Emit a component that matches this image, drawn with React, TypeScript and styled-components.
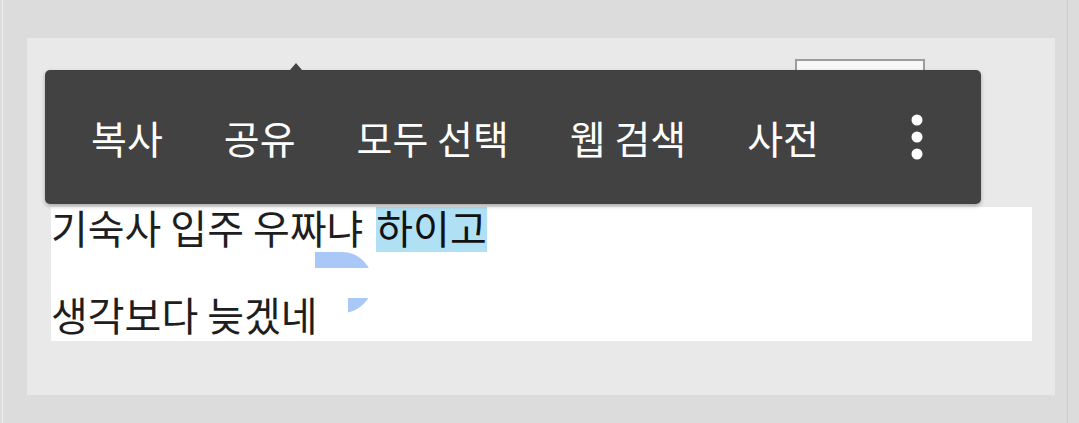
import React from "react";
import styled, { createGlobalStyle } from "styled-components";

const Global = createGlobalStyle`
  html, body { margin: 0; padding: 0; background: #dcdcdc; }
  body { font-family: "Noto Sans CJK KR", "Noto Sans", sans-serif; }
`;

const Screen = styled.div`
  width: 1079px;
  height: 423px;
  box-sizing: border-box;
  padding-left: 2px;
  background: #dcdcdc;
  overflow: hidden;
`;

const Frame = styled.div`
  width: 1066px;
  height: 423px;
  box-sizing: border-box;
  border-left: 1px solid #f0f0f0;
  border-right: 1px solid #cecece;
  padding: 38px 0 0 24px;
`;

const Panel = styled.div`
  position: relative;
  width: 1028px;
  height: 357px;
  box-sizing: border-box;
  background: #e9e9e9;
  padding: 21px 0 0 24px;
  display: flex;
  flex-direction: column;
`;

const HiddenRow = styled.div`
  display: flex;
  height: 40px;
  padding-left: 744px;
`;

const InputBox = styled.div`
  width: 130px;
  height: 40px;
  box-sizing: border-box;
  border: 2px solid #9c9c9c;
  background: #f8f8f8;
`;

const Content = styled.div`
  position: relative;
  margin-top: 108px;
  width: 981px;
  height: 134px;
  background: #ffffff;
  display: flex;
  flex-direction: column;
  color: #1e1e1e;
  font-size: 40px;
`;

const Line = styled.div<{ $gap?: number }>`
  height: 45px;
  line-height: 40px;
  white-space: pre;
  margin-top: ${(p) => p.$gap ?? 0}px;
`;

const Highlight = styled.span`
  display: inline-block;
  height: 45px;
  margin-left: 4px;
  background: #b0e0f4;
  color: #111;
`;

const Decoration = styled.svg`
  position: absolute;
  left: 264px;
  top: 45px;
`;

const Toolbar = styled.div`
  position: absolute;
  left: 18px;
  top: 32px;
  width: 936px;
  height: 134px;
  box-sizing: border-box;
  background: #424242;
  border-radius: 5px;
  box-shadow: 0 2px 4px rgba(0, 0, 0, 0.28);
  display: flex;
  align-items: center;
  padding-left: 46px;
  gap: 61px;

  &::before {
    content: "";
    position: absolute;
    left: 245px;
    top: -7px;
    border-left: 6px solid transparent;
    border-right: 6px solid transparent;
    border-bottom: 7px solid #444444;
  }
`;

const Action = styled.span`
  color: #ffffff;
  font-size: 39px;
  line-height: 1;
  white-space: pre;
`;

const More = styled.svg`
  margin-left: auto;
  margin-right: 58px;
`;

const actions = ["복사", "공유", "모두 선택", "웹 검색", "사전"];

export default function App() {
  return (
    <>
      <Global />
      <Screen>
        <Frame>
          <Panel>
            <HiddenRow>
              <InputBox />
            </HiddenRow>
            <Content>
              <Line>
                {"기숙사 입주 우짜냐 "}
                <Highlight>하이고</Highlight>
              </Line>
              <Line $gap={42}>생각보다 늦겠네</Line>
              <Decoration width="58" height="61" viewBox="0 0 58 61">
                <defs>
                  <clipPath id="dclip">
                    <rect x="0" y="0" width="58" height="16" />
                    <rect x="33" y="46" width="25" height="15" />
                  </clipPath>
                </defs>
                <path
                  d="M0 0 H27 A30.5 30.5 0 0 1 27 61 H0 Z"
                  fill="#a9c8f7"
                  clipPath="url(#dclip)"
                />
              </Decoration>
            </Content>
            <Toolbar>
              {actions.map((a) => (
                <Action key={a}>{a}</Action>
              ))}
              <More width="12" height="46" viewBox="0 0 12 46">
                <circle cx="6" cy="6" r="5.5" fill="#fff" />
                <circle cx="6" cy="23" r="5.5" fill="#fff" />
                <circle cx="6" cy="40" r="5.5" fill="#fff" />
              </More>
            </Toolbar>
          </Panel>
        </Frame>
      </Screen>
    </>
  );
}
